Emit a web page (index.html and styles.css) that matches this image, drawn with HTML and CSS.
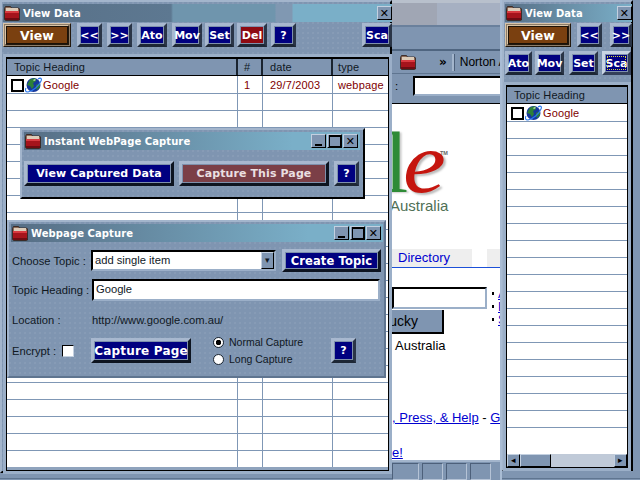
FILE: index.html
```html
<!DOCTYPE html>
<html lang="en">
<head>
<meta charset="utf-8">
<title>View Data</title>
<link rel="stylesheet" href="styles.css">
</head>
<body>
<svg class="defs" width="0" height="0" aria-hidden="true">
  <symbol id="folder" viewBox="0 0 16 16">
    <path d="M.5 3.500l1-2h5l1 1.500h7l1 1v11l-1 .5H1.500l-1-1z" fill="#8c6a58" stroke="#2c1c16" stroke-width=".8"/>
    <path d="M2 3h12v3H2z" fill="#dccbb8"/>
    <path d="M1 6h14v9H1z" fill="#a5141c"/>
    <path d="M1 6h14v2H1z" fill="#d83a40"/>
    <path d="M1 13h14v2H1z" fill="#6e0c12"/>
  </symbol>
  <symbol id="globe" viewBox="0 0 17 17">
    <circle cx="8.500" cy="9" r="7" fill="#16379c"/>
    <path d="M5 3.500l5-1.500 1 3-3 2 1 3-2 3-2-3-3-1zM11 9l4-2v4l-3 3-1-2z" fill="#2d8038"/>
    <path d="M8 4l2-1 1 1-2 1z" fill="#b8e0a8"/>
    <path d="M13 3c3-2 4 0 3 2-2 5-8 10-13 11-3 0-3-2-2-4" fill="none" stroke="#2a78ee" stroke-width="1.100"/>
  </symbol>
</svg>

<main class="desktop">

  <section class="browser">
    <div class="browser-caption"></div>
    <div class="browser-menu"></div>
    <div class="browser-bar">
      <svg class="browser-folder"><use href="#folder"/></svg>
      <span class="chevrons">&raquo;</span>
      <span class="grip"></span>
      <span class="norton">Norton Anti</span>
    </div>
    <div class="address">
      <span class="address-label">:</span>
      <span class="address-box"></span>
    </div>
    <div class="page">
      <div class="logo"><span class="logo-l">l</span><span class="logo-e">e</span><span class="logo-tm">TM</span></div>
      <div class="logo-sub">Australia</div>
      <div class="tabs"><span class="tab">Directory</span><span class="tab tab-next"></span></div>
      <div class="search">
        <span class="search-box"></span>
        <ul class="search-links"><li><a>A</a></li><li><a>P</a></li><li><a>S</a></li></ul>
      </div>
      <div class="lucky">ucky</div>
      <div class="country">Australia</div>
      <div class="page-links"><a>, Press, &amp; Help</a> - <a>G</a></div>
      <div class="page-end"><a>e!</a></div>
    </div>
    <div class="status"><span class="status-first"></span><span></span><span></span><span></span></div>
  </section>

  <section class="win win-data">
    <header class="title title-banded">
      <svg class="folder"><use href="#folder"/></svg>
      <span class="title-text">View Data</span>
      <span class="ctl ctl-end">&#10005;</span>
    </header>
    <div class="toolbar">
      <button class="btn btn-view">View</button>
      <button class="btn w25 ml1">&lt;&lt;</button>
      <button class="btn w25 ml2">&gt;&gt;</button>
      <button class="btn w30 ml2">Ato</button>
      <button class="btn w30 ml2">Mov</button>
      <button class="btn w29 ml3">Set</button>
      <button class="btn btn-del w30 ml3">Del</button>
      <button class="btn w25 ml4">?</button>
      <button class="btn w30 push">Sca</button>
    </div>
    <div class="list list-main">
      <div class="list-head cols">
        <span>Topic Heading</span><span>#</span><span>date</span><span>type</span>
      </div>
      <div class="list-body cols-bg">
        <div class="row cols">
          <span class="cell-topic"><i class="check"></i><svg class="globe"><use href="#globe"/></svg>Google</span>
          <span>1</span><span>29/7/2003</span><span>webpage</span>
        </div>
        <div class="row"></div><div class="row"></div><div class="row"></div><div class="row"></div>
        <div class="row"></div><div class="row"></div><div class="row"></div><div class="row"></div>
        <div class="row"></div><div class="row"></div><div class="row"></div><div class="row"></div>
        <div class="row"></div><div class="row"></div><div class="row"></div><div class="row"></div>
        <div class="row"></div><div class="row"></div><div class="row"></div><div class="row"></div>
        <div class="row"></div><div class="row"></div>
      </div>
    </div>
  </section>

  <section class="win win-side">
    <header class="title title-side">
      <svg class="folder"><use href="#folder"/></svg>
      <span class="title-text">View Data</span>
      <span class="ctl ctl-end">&#10005;</span>
    </header>
    <div class="toolbar">
      <button class="btn btn-view btn-view-side">View</button>
      <button class="btn w25 ml1">&lt;&lt;</button>
      <button class="btn w22 ml5">&gt;&gt;</button>
    </div>
    <div class="toolbar toolbar-side2">
      <button class="btn w27">Ato</button>
      <button class="btn w29 ml3">Mov</button>
      <button class="btn w29 ml2">Set</button>
      <button class="btn w29 ml4 btn-focus">Sca</button>
    </div>
    <div class="list list-side">
      <div class="list-head side-head"><span>Topic Heading</span></div>
      <div class="list-body">
        <div class="row side-row">
          <span class="cell-topic"><i class="check"></i><svg class="globe"><use href="#globe"/></svg>Google</span>
        </div>
        <div class="row"></div><div class="row"></div><div class="row"></div><div class="row"></div>
        <div class="row"></div><div class="row"></div><div class="row"></div><div class="row"></div>
        <div class="row"></div><div class="row"></div><div class="row"></div><div class="row"></div>
        <div class="row"></div><div class="row"></div><div class="row"></div><div class="row"></div>
        <div class="row"></div><div class="row"></div>
      </div>
      <div class="scrollbar">
        <span class="sb-btn">&#9666;</span>
        <span class="sb-thumb"></span>
        <span class="sb-btn sb-right">&#9656;</span>
      </div>
    </div>
  </section>

  <section class="win win-instant">
    <header class="title title-grad">
      <svg class="folder"><use href="#folder"/></svg>
      <span class="title-text">Instant WebPage Capture</span>
      <span class="ctl ctl-end ctl-min"></span><span class="ctl ctl-max"></span><span class="ctl">&#10005;</span>
    </header>
    <div class="instant-actions">
      <button class="btn btn-wide w150">View Captured Data</button>
      <button class="btn btn-capture">Capture This Page</button>
      <button class="btn w25 h25">?</button>
    </div>
  </section>

  <section class="win win-capture">
    <header class="title title-grad title-capture">
      <svg class="folder"><use href="#folder"/></svg>
      <span class="title-text">Webpage Capture</span>
      <span class="ctl ctl-end ctl-min"></span><span class="ctl ctl-max"></span><span class="ctl">&#10005;</span>
    </header>
    <div class="form">
      <div class="form-row row-topic">
        <span class="label">Choose Topic :</span>
        <span class="select"><span class="select-text">add single item</span><span class="select-arrow">&#9662;</span></span>
        <button class="btn btn-wide btn-create">Create Topic</button>
      </div>
      <div class="form-row row-heading">
        <span class="label">Topic Heading :</span>
        <span class="input">Google</span>
      </div>
      <div class="form-row row-location">
        <span class="label">Location :</span>
        <span class="url">http://www.google.com.au/</span>
      </div>
      <div class="form-row row-actions">
        <span class="label-encrypt">Encrypt :</span>
        <i class="encrypt-box"></i>
        <button class="btn btn-wide btn-page">Capture Page</button>
        <div class="radios">
          <label class="radio"><i class="dot dot-on"></i>Normal Capture</label>
          <label class="radio"><i class="dot"></i>Long Capture</label>
        </div>
        <button class="btn w25 h25 btn-help">?</button>
      </div>
    </div>
  </section>

</main>
</body>
</html>
```

FILE: styles.css
```css
* { box-sizing: border-box; }
html, body { margin: 0; padding: 0; }
body {
  width: 640px;
  height: 480px;
  overflow: hidden;
  font-family: "Liberation Sans", Arial, sans-serif;
  font-size: 11.200px;
  color: #000;
}
.defs { position: absolute; }
.desktop {
  position: relative;
  width: 640px;
  height: 480px;
  overflow: hidden;
  background: linear-gradient(#5f7590, #5f7590) 0 478px / 100% 1px no-repeat, #7f95b1;
}

/* windows */
.win {
  position: absolute;
  background-color: #7f95b1;
  background-image: radial-gradient(circle at 1px 1px, #879bb6 0.7px, transparent 1px);
  background-size: 5px 5px;
  border: 2px solid;
  border-color: #a3b5cc #000 #000 #a3b5cc;
}
.win-data { left: 0; top: 0; width: 392px; height: 473px; padding: 2px 0 0 1px; }
.win-side { left: 502px; top: 0; width: 131px; height: 471px; padding: 2px 0 0 1px; }
.win-instant { left: 20px; top: 128px; width: 345px; height: 71px; padding: 2px 0 0 2px; }
.win-capture { left: 7px; top: 220px; width: 379px; height: 158px; border-color: #a3b5cc #5f7590 #5f7590 #a3b5cc; padding: 2px 0 0 2px; }

/* title bars */
.title {
  display: flex;
  align-items: center;
  height: 18px;
  color: #fff;
  font-family: "DejaVu Sans", sans-serif;
  font-weight: bold;
  font-size: 10px;
  letter-spacing: .08px;
}
.title-banded { background: linear-gradient(90deg, #587087 0, #5d7891 168px, #6f95ad 170px, #6f95ad 272px, #8098b2 273px, #8098b2 289px, #7aafc8 290px); margin-right: -2px; }
.title-side { background: linear-gradient(90deg, #587087, #7aafc8); width: 127px; }
.title-grad { background: linear-gradient(90deg, #566d84, #7aafc8 80%); margin-right: 3px; }
.title-capture { margin-right: 1px; }
.folder { width: 16px; height: 16px; margin: 0 3px 0 1px; flex: none; }
.ctl {
  display: flex;
  align-items: center;
  justify-content: center;
  width: 15px;
  height: 14px;
  margin-left: 1px;
  flex: none;
  background: #7f95b1;
  color: #000;
  font: bold 11px "DejaVu Sans", sans-serif;
  border: 1px solid;
  border-color: #c3d0e0 #000 #000 #c3d0e0;
}
.ctl-end { margin-left: auto; }
.ctl-min::before { content: ""; width: 7px; height: 2px; background: #000; margin-top: 7px; }
.ctl-max::before { content: ""; width: 10px; height: 9px; border: 1px solid #000; border-top-width: 2px; }
.win-instant .ctl:last-child, .win-capture .ctl:last-child { margin-right: 2px; }

/* buttons */
.btn {
  display: flex;
  align-items: center;
  justify-content: center;
  height: 24px;
  padding: 0;
  flex: none;
  white-space: nowrap;
  background: #000080;
  color: #fff;
  font-family: "DejaVu Sans", sans-serif;
  font-weight: bold;
  font-size: 11px;
  border: 3px solid;
  border-color: #a8b8cf #2a3547 #1d2735 #a8b8cf;
  box-shadow: inset 0 0 0 1px #7e90ac;
}
.w22 { width: 22px; } .w25 { width: 25px; } .w27 { width: 27px; } .w29 { width: 29px; } .w30 { width: 30px; }
.w150 { width: 150px; }
.h25 { height: 25px; }
.ml1 { margin-left: 6px; } .ml2 { margin-left: 5px; } .ml3 { margin-left: 3px; } .ml4 { margin-left: 4px; } .ml5 { margin-left: 8px; }
.push { margin-left: auto; margin-right: -2px; }
.btn-view {
  width: 68px;
  background: #7a4010;
  font-size: 12.500px;
  border: 3px solid;
  border-color: #d9c4a8 #22180e #22180e #d9c4a8;
  outline: 1px solid #8d7c68;
  outline-offset: -2px;
  box-shadow: inset 0 0 0 1px #1c1208;
}
.btn-view-side { width: 66px; }
.btn-del { background: #8e0a12; }
.btn-wide { height: 25px; font-size: 11px; letter-spacing: .1px; border-color: #a8b8cf #0d1420 #0d1420 #a8b8cf; }
.btn-capture {
  width: 150px;
  height: 25px;
  background: #7b3f47;
  color: #eadfe0;
  letter-spacing: .1px;
  border-color: #a8b8cf #0d1420 #0d1420 #a8b8cf;
}
.btn-focus { outline: 1px dotted #d8d838; outline-offset: -6px; border-color: #c8d4e4 #34405a #34405a #c8d4e4; }

/* toolbars */
.toolbar { display: flex; margin-top: 1px; }
.toolbar-side2 { margin-top: 4px; }

/* lists */
.list {
  background: #fff;
  border: 1px solid #000;
  outline: 3px solid #9bafc8;
  outline-offset: 0;
}
.list-main { width: 383px; height: 414px; margin: 10px 0 0 3px; display: flex; flex-direction: column; }
.list-side { width: 122px; height: 383px; margin: 10px 0 0 1px; display: flex; flex-direction: column; }
.list-head {
  height: 18px;
  flex: none;
  background: #7f95b1;
  border-top: 1px solid #000;
  border-bottom: 1px solid #000;
  color: #10181f;
  line-height: 16px;
  font-size: 11px;
  letter-spacing: .1px;
}
.list-head span { padding-left: 7px; }
.list-head.cols span { border-right: 2px solid #1a2430; height: 16px; }
.list-head.cols span:last-child { border-right: 0; }
.list-head.cols span:nth-child(2), .row.cols > span:nth-child(2) { padding-left: 6px; }
.list-head.cols span:nth-child(4), .row.cols > span:nth-child(4) { padding-left: 5px; }
.cols { display: grid; grid-template-columns: 231px 25px 70px 55px; }
.cols-bg {
  background:
    linear-gradient(#7f97b5, #7f97b5) 230px 0 / 1px 100% no-repeat,
    linear-gradient(#7f97b5, #7f97b5) 255px 0 / 1px 100% no-repeat,
    linear-gradient(#7f97b5, #7f97b5) 325px 0 / 1px 100% no-repeat;
}
.list-body { flex: 1; overflow: hidden; }
.list-main .list-body { border-bottom: 3px solid #8fa3bd; }
.row {
  height: 17px;
  border-bottom: 1px solid #7f97b5;
  color: #800000;
  line-height: 17px;
  font-size: 11px;
  letter-spacing: .15px;
}
.row:first-child { height: 18px; padding-top: 1px; }
.row > span { padding-left: 7px; white-space: nowrap; }
.row > .cell-topic { display: flex; align-items: center; padding-left: 4px; height: 16px; }
.check { width: 13px; height: 13px; border: 2px solid #000; background: #fff; margin: 0 1px 0 0; flex: none; }
.globe { width: 17px; height: 17px; flex: none; margin: -1px 1px 0 0; }

.scrollbar {
  display: flex;
  height: 13px;
  background: #c0cad8;
  flex: none;
}
.sb-btn, .sb-thumb {
  background: #7f95b1;
  border: 1px solid;
  border-color: #c3d0e0 #000 #000 #c3d0e0;
  height: 13px;
}
.sb-btn { width: 13px; font-size: 9px; line-height: 11px; text-align: center; color: #000; }
.sb-thumb { width: 31px; }
.sb-right { margin-left: auto; }

/* instant window */
.instant-actions { display: flex; gap: 5px; margin: 11px 0 0 0; }

/* capture form */
.form { position: relative; }
.form-row { display: flex; align-items: center; color: #10181f; }
.row-topic { height: 23px; margin-top: 7px; }
.label { width: 80px; padding-left: 1px; flex: none; white-space: nowrap; }
.select {
  display: flex;
  align-items: center;
  justify-content: space-between;
  width: 185px;
  height: 21px;
  background: #fff;
  border: 2px solid;
  border-color: #000 #9bafc8 #9bafc8 #000;
  padding-left: 2px;
}
.select-text { margin-top: -1px; }
.select-arrow {
  width: 13px; height: 17px; background: #7f95b1; border: 1px solid; border-color: #c3d0e0 #000 #000 #c3d0e0;
  font-size: 9px; line-height: 14px; text-align: center;
}
.btn-create { width: 99px; height: 23px; margin-left: 6px; font-size: 11.500px; }
.row-heading { height: 22px; margin-top: 7px; }
.input {
  width: 288px; height: 22px; margin-left: 1px;
  background: #fff; border: 2px solid; border-color: #000 #9bafc8 #9bafc8 #000;
  padding-left: 2px; line-height: 16px;
}
.row-location { height: 18px; margin-top: 10px; }
.url { margin-left: 1px; }
.row-actions { height: 25px; margin-top: 9px; }
.label-encrypt { width: 51px; padding-left: 1px; flex: none; }
.encrypt-box { width: 12px; height: 12px; background: #fff; border: 1px solid; border-color: #000 #c3d0e0 #c3d0e0 #000; flex: none; }
.btn-page { width: 100px; margin-left: 17px; font-size: 12px; letter-spacing: .2px; }
.radios { display: flex; flex-direction: column; margin-left: 22px; }
.radio { display: flex; align-items: center; height: 17px; font-size: 10.500px; }
.dot { width: 11px; height: 11px; border-radius: 50%; background: #fff; border: 1px solid #1a2430; margin-right: 5px; flex: none; }
.dot-on { background: radial-gradient(circle, #000 2.500px, #fff 3px); }
.btn-help { margin-left: auto; margin-right: 28px; }

/* browser behind the windows */
.browser {
  position: absolute;
  left: 392px;
  top: 0;
  width: 110px;
  height: 480px;
  background: #7f95b1;
  border-right: 2px solid #a9bcd4;
  display: flex;
  flex-direction: column;
  overflow: hidden;
}
.browser-caption {
  height: 27px;
  flex: none;
  background: linear-gradient(90deg, #a0a6b4 0, #a0a6b4 45px, #a6b0c2 45px);
  border-top: 3px solid #b8c0cc;
  border-bottom: 2px solid #6a809c;
}
.browser-menu { height: 24px; flex: none; border-bottom: 2px solid #4f6580; }
.browser-bar { display: flex; align-items: center; height: 23px; flex: none; border-bottom: 1px solid #5f7590; }
.browser-folder { width: 16px; height: 16px; margin-left: 8px; flex: none; }
.chevrons { margin-left: 23px; font: bold 12px "DejaVu Sans", sans-serif; flex: none; }
.grip { width: 3px; height: 17px; margin-left: 5px; background: #a3b5cc; border-right: 1px solid #4d607a; flex: none; }
.norton { margin-left: 5px; white-space: nowrap; font-size: 12px; flex: none; }
.address { display: flex; align-items: flex-start; height: 29px; padding-top: 2px; flex: none; }
.address-label { margin: 4px 0 0 3px; }
.address-box { width: 90px; height: 20px; margin-left: 15px; background: #fff; border: 2px solid; border-color: #000 #9bafc8 #9bafc8 #000; flex: none; }
.page {
  position: relative;
  height: 357px;
  flex: none;
  background: #fff;
  font-size: 13px;
  overflow: hidden;
  border-top: 1px solid #000;
}
.page a { color: #0000d0; text-decoration: underline; }
.logo { position: absolute; left: -8px; top: 9px; height: 100px; width: 110px; }
.logo-l { position: absolute; left: 0; top: 0; font: 87px/100px "Liberation Serif", serif; color: #2e8b36; text-shadow: 2px 1px 2px #ccc; }
.logo-e { position: absolute; left: 19px; top: 0; font: italic 86px/100px "Liberation Serif", serif; color: #c5160f; text-shadow: 2px 2px 2px #bbb; transform: scaleX(1.120); transform-origin: left center; }
.logo-tm { position: absolute; left: 56px; top: 37px; font: bold 5.500px "Liberation Sans", sans-serif; color: #666; }
.logo-sub { position: absolute; left: -2px; top: 93px; color: #4f6f55; font-size: 15px; }
.tabs { position: absolute; left: 0; top: 145px; width: 108px; height: 19px; border-bottom: 1px solid #1c50d8; display: flex; overflow: hidden; }
.tab { width: 80px; flex: none; background: #eee; color: #0000d0; padding-left: 6px; line-height: 18px; }
.tab-next { width: 40px; margin-left: 15px; }
.search { position: absolute; left: 0; top: 183px; display: flex; width: 108px; overflow: hidden; }
.search-box { width: 95px; height: 22px; background: #fff; border: 2px solid; border-color: #000 #9bafc8 #9bafc8 #000; flex: none; }
.search-links { list-style: none; margin: 0 0 0 5px; padding: 0; line-height: 13px; }
.search-links li { display: flex; align-items: center; white-space: nowrap; }
.search-links li::before { content: ""; width: 2px; height: 3px; background: #000; margin-right: 4px; }
.lucky { position: absolute; left: -30px; top: 206px; width: 82px; height: 24px; text-align: right; padding-right: 24px; background: #7f95b1; border-right: 2px solid #000; border-bottom: 2px solid #000; line-height: 22px; font-size: 14px; }
.country { position: absolute; left: 3px; top: 234px; }
.page-links { position: absolute; left: 0; top: 306px; white-space: nowrap; }
.page-end { position: absolute; left: 0; top: 341px; }
.status { display: flex; gap: 3px; height: 20px; padding: 1px 0 0 0; flex: none; background: #7f95b1; border-top: 2px solid #a3b5cc; }
.status span { width: 21px; height: 17px; flex: none; border: 1px solid; border-color: #4d607a #b5c3d6 #b5c3d6 #4d607a; }
.status .status-first { width: 27px; }
```
